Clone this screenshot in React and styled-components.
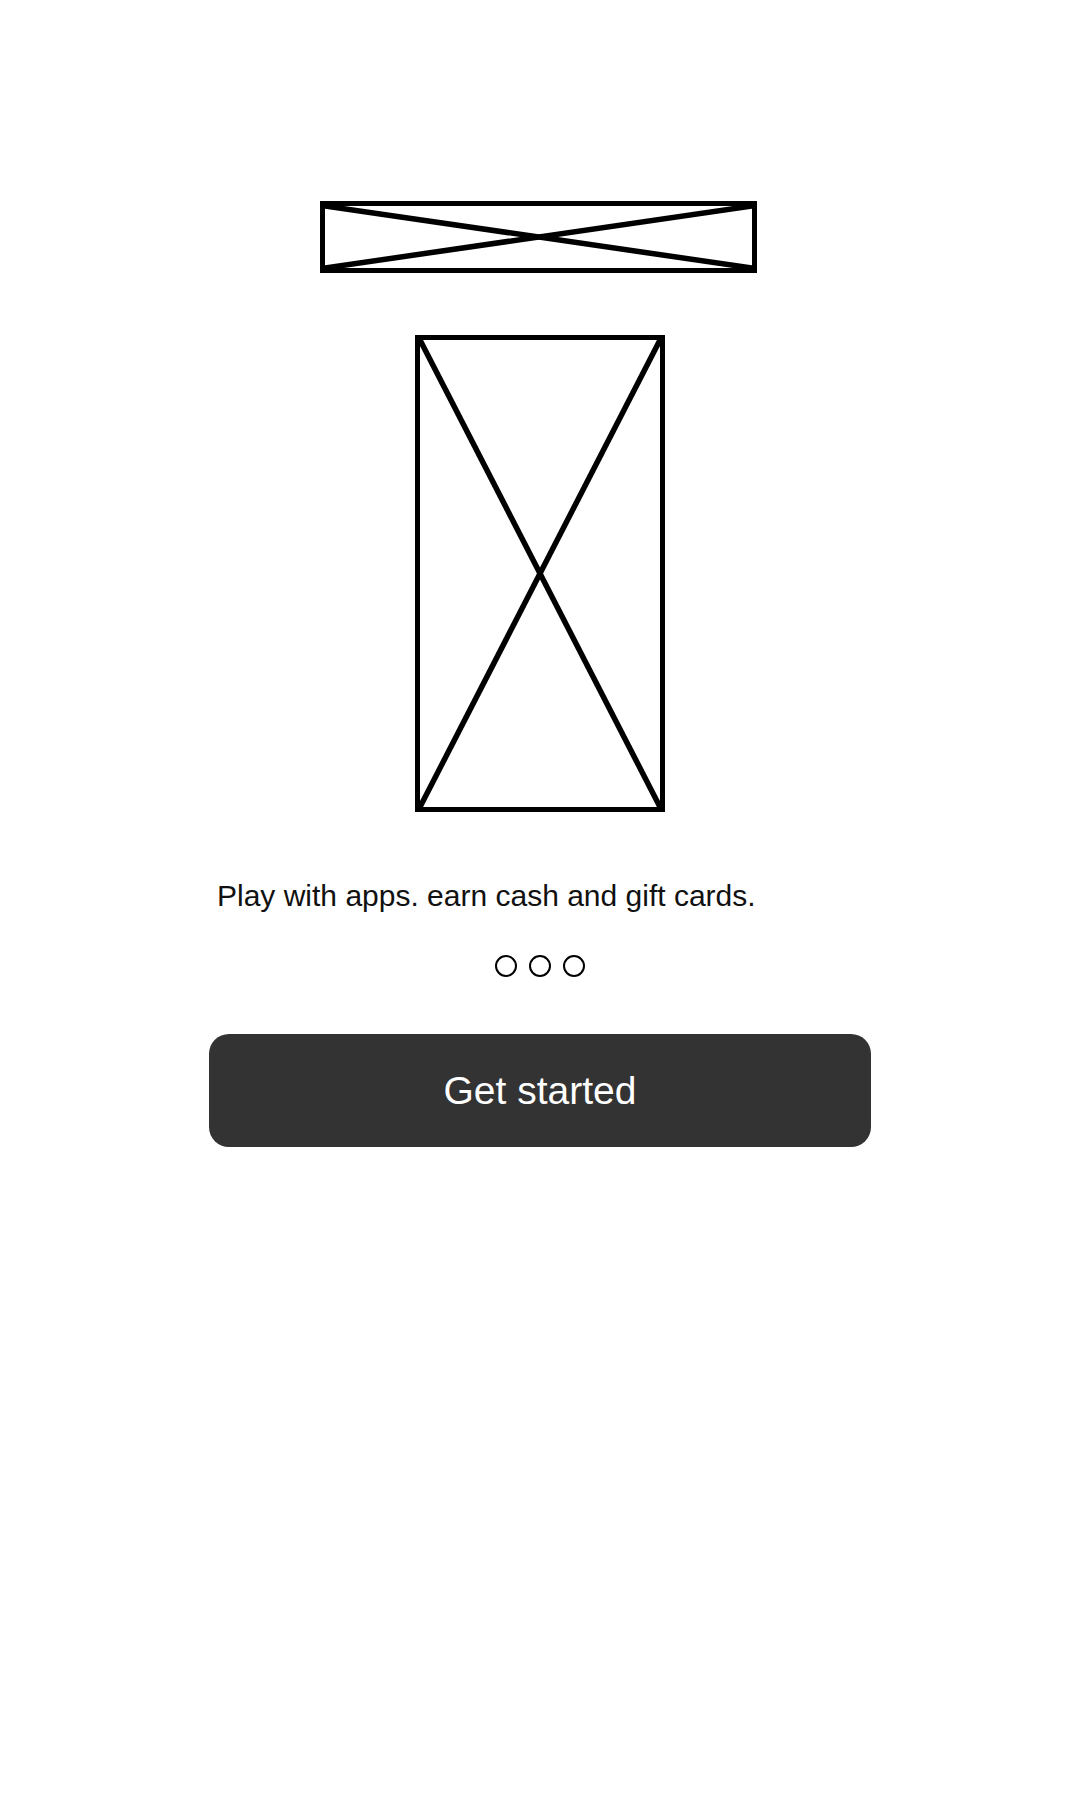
import React from 'react';
import styled, { createGlobalStyle } from 'styled-components';

const GlobalStyle = createGlobalStyle`
  body {
    margin: 0;
    background: #ffffff;
    font-family: "Liberation Sans", Arial, sans-serif;
  }
`;

const Screen = styled.main`
  display: flex;
  flex-direction: column;
  align-items: center;
  padding-top: 201px;
  min-height: 1800px;
  box-sizing: border-box;
`;

const Placeholder = styled.div`
  position: relative;
  width: ${(p) => p.$w}px;
  height: ${(p) => p.$h}px;
  margin-bottom: ${(p) => p.$gap || 0}px;
  margin-right: ${(p) => p.$shift || 0}px;
  border: 5px solid #000;
  box-sizing: border-box;

  svg {
    display: block;
    width: 100%;
    height: 100%;
  }
`;

const Column = styled.section`
  width: 662px;
  display: flex;
  flex-direction: column;
  align-items: stretch;
`;

const Tagline = styled.p`
  margin: 0;
  padding-left: 8px;
  font-size: 30px;
  line-height: 34px;
  color: #111;
`;

const Dots = styled.div`
  display: flex;
  justify-content: center;
  gap: 12px;
  margin: 42px 0 57px;
`;

const Dot = styled.span`
  width: 22px;
  height: 22px;
  border-radius: 50%;
  border: 2.5px solid #000;
  box-sizing: border-box;
  background: ${(p) => (p.$active ? '#000' : 'transparent')};
`;

const StartButton = styled.button`
  height: 113px;
  border: none;
  border-radius: 20px;
  background: #333333;
  color: #ffffff;
  font-family: "Liberation Sans", Arial, sans-serif;
  font-size: 39px;
  cursor: pointer;
`;

function ImageBox({ w, h, gap, shift }) {
  return (
    <Placeholder $w={w} $h={h} $gap={gap} $shift={shift}>
      <svg viewBox="0 0 100 100" preserveAspectRatio="none">
        <line x1="0" y1="0" x2="100" y2="100" stroke="#000" strokeWidth="5.5" vectorEffect="non-scaling-stroke" />
        <line x1="100" y1="0" x2="0" y2="100" stroke="#000" strokeWidth="5.5" vectorEffect="non-scaling-stroke" />
      </svg>
    </Placeholder>
  );
}

export default function App() {
  return (
    <>
      <GlobalStyle />
      <Screen>
        <ImageBox w={437} h={72} gap={62} shift={3} />
        <ImageBox w={250} h={477} gap={67} />
        <Column>
          <Tagline>Play with apps. earn cash and gift cards.</Tagline>
          <Dots>
            <Dot />
            <Dot />
            <Dot />
          </Dots>
          <StartButton>Get started</StartButton>
        </Column>
      </Screen>
    </>
  );
}
